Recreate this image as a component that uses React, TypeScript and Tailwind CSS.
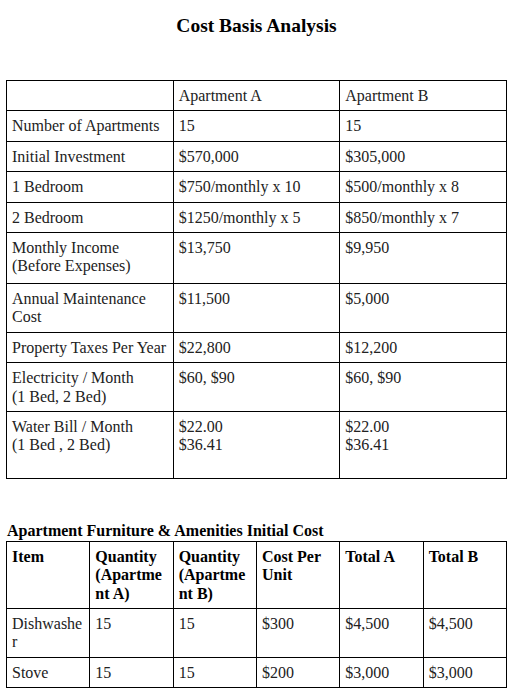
export default function App() {
  const rows: { label: string[]; a: string[]; b: string[]; extra?: boolean; tall?: boolean }[] = [
    { label: ["Number of Apartments"], a: ["15"], b: ["15"] },
    { label: ["Initial Investment"], a: ["$570,000"], b: ["$305,000"] },
    { label: ["1 Bedroom"], a: ["$750/monthly x 10"], b: ["$500/monthly x 8"] },
    { label: ["2 Bedroom"], a: ["$1250/monthly x 5"], b: ["$850/monthly x 7"] },
    { label: ["Monthly Income", "(Before Expenses)"], a: ["$13,750"], b: ["$9,950"], tall: true },
    { label: ["Annual Maintenance", "Cost"], a: ["$11,500"], b: ["$5,000"] },
    { label: ["Property Taxes Per Year"], a: ["$22,800"], b: ["$12,200"] },
    { label: ["Electricity / Month", "(1 Bed, 2 Bed)"], a: ["$60, $90"], b: ["$60, $90"] },
    {
      label: ["Water Bill / Month", "(1 Bed , 2 Bed)"],
      a: ["$22.00", "$36.41"],
      b: ["$22.00", "$36.41"],
      extra: true,
    },
  ]

  const items = [
    ["Dishwasher", "15", "15", "$300", "$4,500", "$4,500"],
    ["Stove", "15", "15", "$200", "$3,000", "$3,000"],
  ]

  const cell = "border border-black px-[5px] pt-[6px] pb-[5px] align-top"

  const lines = (l: string[], extra?: boolean) => (
    <>
      {l.map((t, i) => (
        <div key={i}>{t}</div>
      ))}
      {extra && <div>&nbsp;</div>}
    </>
  )

  return (
    <div className="min-h-[694px] bg-white font-['Liberation_Serif',serif] text-[16px] leading-[18.4px] text-[#222]">
      <h3 className="pt-[15px] text-center text-[19.5px] font-bold leading-[22px] text-black">
        Cost Basis Analysis
      </h3>

      <table className="ml-[6px] mt-[43px] w-[501px] table-fixed border-collapse">
        <tbody>
          <tr>
            <td className={cell}></td>
            <td className={cell}>Apartment A</td>
            <td className={cell}>Apartment B</td>
          </tr>
          {rows.map((r, i) => (
            <tr key={i} className={r.tall ? "h-[51px]" : ""}>
              <td className={cell}>{lines(r.label, r.extra)}</td>
              <td className={cell}>{lines(r.a)}</td>
              <td className={cell}>{lines(r.b)}</td>
            </tr>
          ))}
        </tbody>
      </table>

      <div className="ml-[7px] mt-[43px] font-bold text-black">
        Apartment Furniture &amp; Amenities Initial Cost
      </div>
      <table className="ml-[6px] w-[501px] table-fixed border-collapse">
        <tbody>
          <tr className="font-bold text-black">
            <td className={cell}>Item</td>
            <td className={`${cell} break-words`}>Quantity (Apartment A)</td>
            <td className={`${cell} break-words`}>Quantity (Apartment B)</td>
            <td className={cell}>Cost Per Unit</td>
            <td className={cell}>Total A</td>
            <td className={cell}>Total B</td>
          </tr>
          {items.map((r, i) => (
            <tr key={i}>
              {r.map((c, j) => (
                <td key={j} className={`${cell} break-words`}>
                  {c}
                </td>
              ))}
            </tr>
          ))}
        </tbody>
      </table>
    </div>
  )
}
